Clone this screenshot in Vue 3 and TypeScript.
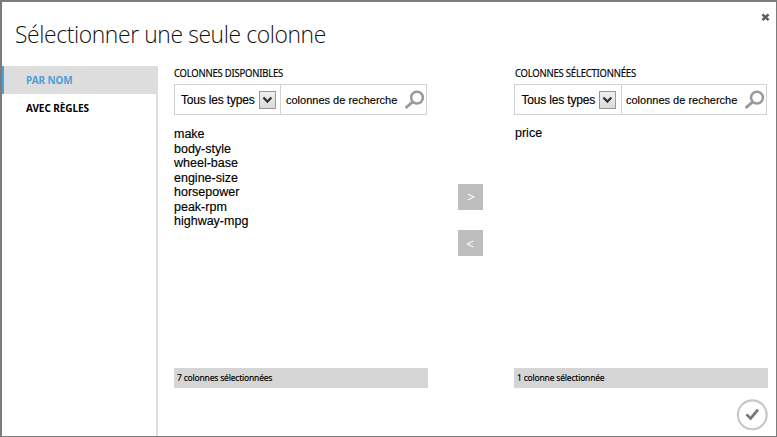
<script setup lang="ts">
import { ref } from 'vue'

interface Panel {
  id: string
  title: string
  items: string[]
  status: string
}

const tabs: string[] = ['PAR NOM', 'AVEC RÈGLES']
const activeTab = ref(0)

const available: Panel = {
  id: 'available',
  title: 'COLONNES DISPONIBLES',
  items: ['make', 'body-style', 'wheel-base', 'engine-size', 'horsepower', 'peak-rpm', 'highway-mpg'],
  status: '7 colonnes sélectionnées',
}
const selected: Panel = {
  id: 'selected',
  title: 'COLONNES SÉLECTIONNÉES',
  items: ['price'],
  status: '1 colonne sélectionnée',
}
const panels: Panel[] = [available, selected]
</script>

<template>
  <div class="dialog">
    <header class="header">
      <h1 class="title">Sélectionner une seule colonne</h1>
      <svg class="close" width="9" height="9" viewBox="0 0 9 9">
        <path d="M1.4 1.4 L7.6 7.2 M7.6 1.4 L1.4 7.2" stroke="#5c5c5c" stroke-width="2.5" fill="none" />
      </svg>
    </header>
    <div class="body">
      <nav class="side">
        <div
          v-for="(tab, i) in tabs"
          :key="tab"
          class="tab"
          :class="{ active: i === activeTab }"
          @click="activeTab = i"
        ><span>{{ tab }}</span></div>
      </nav>
      <main class="main">
        <section v-for="panel in panels" :key="panel.id" class="panel" :class="panel.id">
          <h2 class="caption"><span>{{ panel.title }}</span></h2>
          <div class="filter">
            <div class="types">
              <span class="types-label">Tous les types</span>
              <span class="drop">
                <svg width="15" height="16" viewBox="0 0 15 16">
                  <path d="M3.4 5.4 L7.4 9.6 L11.4 5.4" stroke="#333" stroke-width="2.2" fill="none" />
                </svg>
              </span>
            </div>
            <div class="search">
              <span class="search-label">colonnes de recherche</span>
              <svg class="glass" width="21" height="20" viewBox="0 0 21 20">
                <circle cx="13" cy="7.6" r="5.9" fill="none" stroke="#999" stroke-width="2.5" />
                <path d="M8.6 11.8 L1.6 18" stroke="#999" stroke-width="2.9" fill="none" />
              </svg>
            </div>
          </div>
          <ul class="list">
            <li v-for="item in panel.items" :key="item">{{ item }}</li>
          </ul>
          <div class="status"><span>{{ panel.status }}</span></div>
        </section>
        <div class="movers">
          <button class="mover" type="button">
            <svg width="25" height="26" viewBox="0 0 25 26">
              <path d="M9.8 10 L15.8 13 L9.8 16" stroke="#f8f8f8" stroke-width="1.2" fill="none" />
            </svg>
          </button>
          <button class="mover" type="button">
            <svg width="25" height="26" viewBox="0 0 25 26">
              <path d="M15.4 11 L9.2 14 L15.4 17" stroke="#f8f8f8" stroke-width="1.2" fill="none" />
            </svg>
          </button>
        </div>
      </main>
    </div>
    <footer class="footer">
      <svg width="32" height="32" viewBox="0 0 32 32">
        <circle cx="16.3" cy="15.8" r="14.4" fill="#fff" stroke="#c6c6c6" stroke-width="2.1" />
        <path d="M10.5 15.4 L14.6 19.4 L22 10.6" stroke="#777" stroke-width="2.7" fill="none" />
      </svg>
    </footer>
  </div>
</template>

<style>
body {
  background: #fff;
  overflow: hidden;
}
</style>

<style scoped>
.dialog {
  box-sizing: border-box;
  width: 777px;
  height: 437px;
  border: 1px solid #7b7b7b;
  border-top-width: 2px;
  border-left-width: 2px;
  background: #fff;
  color: #000;
  display: flex;
  flex-direction: column;
  overflow: hidden;
  font-family: "Noto Sans", sans-serif;
}
.header {
  height: 64px;
  flex: none;
  display: flex;
  justify-content: space-between;
  align-items: flex-start;
  padding: 0 6px 0 13px;
  box-sizing: border-box;
}
.title {
  margin: 14px 0 0;
  font: 300 24px/36px "Open Sans", sans-serif;
  letter-spacing: -0.4px;
  color: #111;
  white-space: nowrap;
  transform: scaleX(0.952);
  transform-origin: 0 50%;
}
.close {
  margin-top: 11px;
}
.body {
  flex: 1;
  display: flex;
  min-height: 0;
  margin-bottom: -37px;
}
.side {
  width: 156px;
  box-sizing: border-box;
  border-right: 2px solid #ddd;
  flex: none;
}
.tab {
  height: 28px;
  padding-left: 24px;
  font: 700 10px/28px "Noto Sans", sans-serif;
  letter-spacing: -0.08px;
  white-space: nowrap;
}
.active {
  background: #ddd;
  color: #4f9fd6;
  box-shadow: inset 2px 0 #4f9fd6;
}
.main {
  flex: 1;
  display: grid;
  grid-template-columns: 254px 86px 254px;
  padding-left: 16px;
}
.panel {
  grid-row: 1;
  display: flex;
  flex-direction: column;
}
.available {
  grid-column: 1;
}
.selected {
  grid-column: 3;
}
.caption {
  margin: 0;
  height: 18px;
  font: 400 10px/14px "Noto Sans", sans-serif;
  letter-spacing: -0.2px;
  white-space: nowrap;
  -webkit-text-stroke: 0.15px #000;
}
.caption span,
.status span {
  display: inline-block;
  transform: scaleX(0.945);
  transform-origin: 0 50%;
}
.selected .caption {
  padding-left: 1px;
}
.filter {
  height: 31px;
  width: 253px;
  box-sizing: border-box;
  border: 1px solid #d2d2d2;
  display: flex;
  font-family: "Liberation Sans", Arial, sans-serif;
  white-space: nowrap;
  -webkit-text-stroke: 0.15px #000;
}
.types {
  width: 106px;
  box-sizing: border-box;
  border-right: 1px solid #d2d2d2;
  display: flex;
  align-items: center;
  justify-content: space-between;
  padding: 0 4px 0 6px;
}
.selected .types {
  width: 107px;
}
.selected .types {
  padding: 0 5px 0 6.5px;
}
.selected .search {
  padding-left: 4px;
}
.types-label {
  font-size: 12px;
  letter-spacing: -0.18px;
}
.drop {
  width: 15px;
  height: 16px;
  border: 1px solid #999;
  background: linear-gradient(#f0f0f0, #dadada);
}
.drop svg,
.mover svg {
  display: block;
}
.search {
  flex: 1;
  display: flex;
  align-items: center;
  justify-content: space-between;
  padding: 0 1px 0 5px;
}
.search-label {
  font-size: 11px;
}
.list {
  list-style: none;
  margin: 12px 0 0;
  padding: 0;
  height: 241px;
  font: 12.5px/14.5px "Liberation Sans", Arial, sans-serif;
  -webkit-text-stroke: 0.15px #000;
}
.selected .list {
  margin-top: 11px;
  height: 242px;
  padding-left: 1px;
}
.status {
  height: 20px;
  padding-left: 3px;
  background: #d5d5d5;
  font: 9px/20px "Noto Sans", sans-serif;
  letter-spacing: -0.2px;
  white-space: nowrap;
  -webkit-text-stroke: 0.15px #000;
}
.movers {
  grid-column: 2;
  grid-row: 1;
  display: flex;
  flex-direction: column;
  align-items: center;
  gap: 20px;
  padding: 118px 2px 0 0;
}
.mover {
  width: 25px;
  height: 26px;
  padding: 0;
  border: 0;
  background: #bdbdbd;
}
.footer {
  height: 37px;
  flex: none;
  display: flex;
  justify-content: flex-end;
  padding-right: 8px;
  position: relative;
}
</style>
